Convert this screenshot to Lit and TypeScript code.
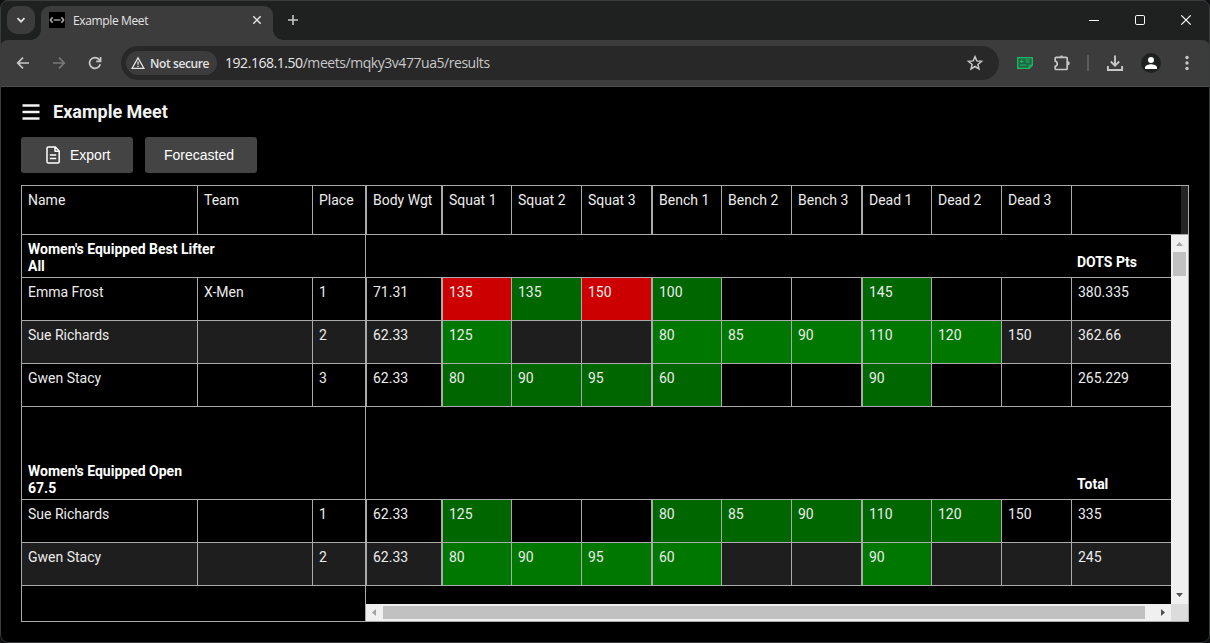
import { LitElement, html, css, nothing } from "lit";
import { customElement, property } from "lit/decorators.js";
import { classMap } from "lit/directives/class-map.js";

type Attempt = [string, "good" | "bad" | ""];
interface Lifter {
  name: string;
  team: string;
  place: string;
  weight: string;
  attempts: Attempt[];
  score: string;
}
interface Group {
  title: string;
  division: string;
  scoreLabel: string;
  tall: boolean;
  lifters: Lifter[];
}

const g = (v: string): Attempt => [v, "good"];
const b = (v: string): Attempt => [v, "bad"];
const n = (v = ""): Attempt => [v, ""];

const gwen: Attempt[] = [g("80"), g("90"), g("95"), g("60"), n(), n(), g("90"), n(), n()];
const sue: Attempt[] = [g("125"), n(), n(), g("80"), g("85"), g("90"), g("110"), g("120"), n("150")];

const GROUPS: Group[] = [
  {
    title: "Women's Equipped Best Lifter",
    division: "All",
    scoreLabel: "DOTS Pts",
    tall: false,
    lifters: [
      {
        name: "Emma Frost", team: "X-Men", place: "1", weight: "71.31", score: "380.335",
        attempts: [b("135"), g("135"), b("150"), g("100"), n(), n(), g("145"), n(), n()],
      },
      { name: "Sue Richards", team: "", place: "2", weight: "62.33", attempts: sue, score: "362.66" },
      { name: "Gwen Stacy", team: "", place: "3", weight: "62.33", attempts: gwen, score: "265.229" },
    ],
  },
  {
    title: "Women's Equipped Open",
    division: "67.5",
    scoreLabel: "Total",
    tall: true,
    lifters: [
      { name: "Sue Richards", team: "", place: "1", weight: "62.33", attempts: sue, score: "335" },
      { name: "Gwen Stacy", team: "", place: "2", weight: "62.33", attempts: gwen, score: "245" },
    ],
  },
];

const LIFTS = ["Squat 1", "Squat 2", "Squat 3", "Bench 1", "Bench 2", "Bench 3", "Dead 1", "Dead 2", "Dead 3"];

@customElement("browser-chrome")
export class BrowserChrome extends LitElement {
  @property() caption = "";
  @property() host = "";
  @property() path = "";

  static styles = css`
    :host { display: block; font-family: "Open Sans", "Noto Sans", sans-serif; color: #e3e3e3; }
    svg { display: block; fill: none; stroke: #c7c7c7; stroke-width: 1.7; flex: none; }
    .strip {
      height: 40px; box-sizing: border-box; padding-left: 7px; display: flex; align-items: flex-end;
      background: #1f2120; border-top: 1px solid #3b3d3f;
    }
    .search {
      width: 28px; height: 28px; border-radius: 10px; background: #3c3c3c; margin-bottom: 6px;
      display: grid; place-items: center;
    }
    .search svg { stroke: #e3e3e3; }
    .tab {
      position: relative; width: 232px; height: 34px; margin-left: 6px; background: #3c3c3c;
      border-radius: 9px 9px 0 0; display: flex; align-items: center; box-sizing: border-box;
      padding: 0 10px 6px 8px;
    }
    .tab::before, .tab::after {
      content: ""; position: absolute; bottom: 0; width: 10px; height: 10px;
    }
    .tab::before { left: -10px; background: radial-gradient(circle at 0 0, transparent 9.5px, #3c3c3c 10px); }
    .tab::after { right: -10px; background: radial-gradient(circle at 100% 0, transparent 9.5px, #3c3c3c 10px); }
    .caption { flex: 1; margin-left: 8px; padding-top: 2px; font-size: 12px; line-height: 16px; letter-spacing: -0.37px; }
    .plus { margin: 0 0 14px 14px; }
    .controls { margin: 0 1px 0 auto; display: flex; padding-bottom: 14px; }
    .control { width: 46px; display: grid; place-items: center; }
    .control svg { stroke: #fff; stroke-width: 1; }
    .under { background: #1f2120; }
    .bar {
      height: 47px; box-sizing: border-box; background: #3c3c3c; border-bottom: 1px solid #4e4e4e;
      display: flex; align-items: center; padding-left: 5px; border-radius: 8px 8px 0 0;
    }
    .icon { width: 36px; display: grid; place-items: center; }
    .icon.wide { width: 37px; }
    .dim svg { stroke: #777; }
    .omni {
      width: 878px; height: 34px; margin: 0 8px; border-radius: 17px; background: #282828;
      display: flex; align-items: center; box-sizing: border-box; padding: 0 15px 0 5px;
    }
    .chip {
      width: 91px; height: 24px; border-radius: 12px; background: #3c3c3c; display: flex;
      align-items: center; box-sizing: border-box; padding-left: 5px; font-size: 12px; font-weight: 600;
      white-space: nowrap; letter-spacing: -0.4px;
    }
    .chip span { margin-left: 5px; }
    .url { flex: 1; margin-left: 8px; font-size: 14px; line-height: 18px; color: #c7c7c7; letter-spacing: -0.45px; }
    .url b { font-weight: 400; color: #e8e8e8; }
    .note svg { stroke: #1fb866; }
    .avatar svg, .more svg { stroke: none; fill: #c7c7c7; }
    .sep { width: 16px; display: grid; place-items: center; }
    .sep i { width: 2px; height: 16px; background: #5c5c5c; }
    .sep + .icon { margin-left: 1px; }
  `;

  render() {
    return html`
      <div class="strip">
        <div class="search">
          <svg width="10" height="10"><path d="M1.5 3.2 5 6.7 8.5 3.2" /></svg>
        </div>
        <div class="tab">
          <svg width="16" height="16" stroke-linejoin="round">
            <rect width="16" height="16" fill="#000" stroke="none" />
            <path d="M3.6 5.2 1.4 8l2.2 2.800M12.4 5.200l2.200 2.800-2.200 2.800" stroke="#aaa" stroke-width="1.6" />
            <path d="M4.500 8h7" stroke="#999" stroke-width="1.4" />
          </svg>
          <span class="caption">${this.caption}</span>
          <svg width="12" height="12"><path d="m2.3 2.3 7.4 7.4M9.7 2.3 2.3 9.7" stroke="#e3e3e3" stroke-width="1.5" /></svg>
        </div>
        <svg class="plus" width="12" height="12"><path d="M6 1v10M1 6h10" stroke-width="1.6" /></svg>
        <div class="controls">
          <div class="control"><svg width="12" height="12"><path d="M1 6.5h10" /></svg></div>
          <div class="control"><svg width="12" height="12"><rect x="1.5" y="1.5" width="9" height="9" rx="1.3" /></svg></div>
          <div class="control"><svg width="12" height="12"><path d="m1.3 1.3 9.4 9.4M10.7 1.3 1.3 10.7" stroke-width="1.2" /></svg></div>
        </div>
      </div>
      <div class="under">
        <div class="bar">
          <div class="icon"><svg width="16" height="16"><path d="M14 8H3M8 2.7 2.7 8 8 13.3" /></svg></div>
          <div class="icon dim"><svg width="16" height="16"><path d="M2 8h11M8 2.7 13.3 8 8 13.3" /></svg></div>
          <div class="icon">
            <svg width="16" height="16"><path d="M13.2 9.2A5.4 5.4 0 1 1 12 4.4L13.4 6M13.6 2v4.4H9.2" /></svg>
          </div>
          <div class="omni">
            <div class="chip">
              <svg width="14" height="14"><path d="M7 1.9 12.9 12.3H1.1Z M7 5.4v3.4M7 9.7v1.3" stroke-width="1.3" stroke="#e3e3e3" /></svg>
              <span>Not secure</span>
            </div>
            <span class="url"><b>${this.host}</b>${this.path}</span>
            <svg width="18" height="18">
              <path d="m9 2.6 1.8 4.3 4.7.4-3.6 3.1 1.1 4.6L9 12.5 5 15l1.1-4.6L2.5 7.3l4.7-.4Z" stroke-width="1.5" />
            </svg>
          </div>
          <div class="icon note">
            <svg width="16" height="12">
              <path d="M.7.7h14.6v7.6l-3 3H.7Z" stroke-width="1.3" fill="#1d6a42" />
              <path d="M3 4.500h3.500M4.700 2.500v3.500M8.500 3h4M8.500 5h4M3 8h6.500M12 11V8.300h3" stroke-width="1" />
            </svg>
          </div>
          <div class="icon wide">
            <svg width="18" height="18">
              <path d="M2.2 4.3a1 1 0 0 1 1-1h10a1 1 0 0 1 1 1v10.2a1 1 0 0 1-1 1h-10a1 1 0 0 1-1-1v-2.200c2.700-.6 2.700-4.600 0-5.200Z" stroke-width="1.7" />
              <path d="M6.600 2.800a2 2 0 0 1 3.800 0ZM14.800 7.300a2 2 0 0 1 0 4Z" fill="#c7c7c7" stroke="none" />
            </svg>
          </div>
          <div class="sep"><i></i></div>
          <div class="icon">
            <svg width="18" height="18"><path d="M9 1.5v10M4.8 7.5 9 11.7l4.2-4.2M1.9 12v4h14.2v-4" stroke-width="1.9" /></svg>
          </div>
          <div class="icon avatar">
            <svg width="20" height="20">
              <circle cx="10" cy="10" r="10" fill="#1f2120" />
              <circle cx="10" cy="7" r="3" fill="#fff" />
              <path d="M4 16v-1.4C4 12.2 8 11.3 10 11.3s6 .9 6 3.3V16Z" fill="#fff" />
            </svg>
          </div>
          <div class="icon more">
            <svg width="4" height="16">
              <circle cx="2" cy="2.5" r="1.7" /><circle cx="2" cy="8" r="1.7" /><circle cx="2" cy="13.5" r="1.7" />
            </svg>
          </div>
        </div>
      </div>
    `;
  }
}

@customElement("results-grid")
export class ResultsGrid extends LitElement {
  static styles = css`
    :host {
      display: block; border: 1px solid #aaa; box-sizing: border-box; width: 1168px; height: 437px;
      font: 14px/17px Roboto, sans-serif; color: #ececec;
    }
    .head { display: flex; height: 49px; box-sizing: border-box; border-bottom: 1px solid #aaa; background: #242424; }
    .head .row { height: 48px; border-bottom: 0; background: #000; }
    .head .total { width: 109px; }
    .body { display: grid; grid-template-columns: 344px 805px 17px; grid-template-rows: 369px 17px; }
    .pinned { grid-row: 1 / 3; box-sizing: border-box; border-right: 1px solid #aaa; }
    .row { display: flex; height: 43px; box-sizing: border-box; border-bottom: 1px solid #aaa; }
    .row.alt { background: #1e1e1e; }
    .cell { box-sizing: border-box; flex: none; padding: 6px 0 0 6px; border-right: 1px solid #aaa; white-space: nowrap; }
    .name { width: 176px; }
    .team { width: 115px; }
    .place { width: 52px; border-right: 0; }
    .head .place { width: 53px; border-right: 1px solid #aaa; }
    .weight { width: 76px; border-left: 1px solid #aaa; }
    .lift { width: 70px; }
    .first { border-left: 1px solid #aaa; }
    .total { width: 99px; border-right: 0; }
    .good { background: #060; }
    .alt .good { background: #070; }
    .bad { background: #c00; }
    .group { align-items: flex-end; font-weight: 700; color: #fff; }
    .group.tall { height: 93px; }
    .group div { padding: 0 0 2px 6px; white-space: pre; }
    .group .label { margin-left: 705px; padding-bottom: 6px; }
    .vbar, .hbar { background: #f0f0f0; display: flex; justify-content: space-between; align-items: center; }
    .vbar { flex-direction: column; }
    .thumb { background: #c1c1c1; }
    .vbar .thumb { width: 13px; height: 24px; margin-bottom: auto; }
    .hbar .thumb { width: 762px; height: 13px; margin-right: auto; }
    .corner { background: #dcdcdc; }
    svg { display: block; fill: #505050; }
    .off { fill: #a3a3a3; }
  `;

  private pinnedCells(name: string, team: string, place: string) {
    return html`
      <div class="cell name">${name}</div>
      <div class="cell team">${team}</div>
      <div class="cell place">${place}</div>
    `;
  }

  private scoreCells(weight: string, attempts: Attempt[], score: string) {
    return html`
      <div class="cell weight">${weight}</div>
      ${attempts.map(
        ([value, result], i) => html`<div
          class=${classMap({ cell: true, lift: true, first: i % 3 === 0, good: result === "good", bad: result === "bad" })}
        >${value}</div>`
      )}
      <div class="cell total">${score || nothing}</div>
    `;
  }

  render() {
    return html`
      <div class="head">
        <div class="row">
          ${this.pinnedCells("Name", "Team", "Place")}
          ${this.scoreCells("Body Wgt", LIFTS.map((l): Attempt => [l, ""]), "")}
        </div>
      </div>
      <div class="body">
        <div class="pinned">
          ${GROUPS.map(
            (group) => html`
              <div class=${classMap({ row: true, group: true, tall: group.tall })}><div>${group.title + "\n" + group.division}</div></div>
              ${group.lifters.map(
                (l, i) => html`<div class=${classMap({ row: true, alt: i % 2 === 1 })}>${this.pinnedCells(l.name, l.team, l.place)}</div>`
              )}
            `
          )}
        </div>
        <div>
          ${GROUPS.map(
            (group) => html`
              <div class=${classMap({ row: true, group: true, tall: group.tall })}><div class="label">${group.scoreLabel}</div></div>
              ${group.lifters.map(
                (l, i) => html`<div class=${classMap({ row: true, alt: i % 2 === 1 })}>${this.scoreCells(l.weight, l.attempts, l.score)}</div>`
              )}
            `
          )}
        </div>
        <div class="vbar">
          <svg class="off" width="17" height="17"><path d="M5 11 8.5 7 12 11Z" /></svg>
          <div class="thumb"></div>
          <svg width="17" height="17"><path d="M5 6h7L8.5 10Z" /></svg>
        </div>
        <div class="hbar">
          <svg class="off" width="17" height="17"><path d="M10 5v7L6 8.5Z" /></svg>
          <div class="thumb"></div>
          <svg width="17" height="17"><path d="M7 5v7l4-3.5Z" /></svg>
        </div>
        <div class="corner"></div>
      </div>
    `;
  }
}

@customElement("app-root")
export class AppRoot extends LitElement {
  static styles = css`
    :host { display: block; width: 1210px; height: 643px; background: #101112; overflow: hidden; }
    .window {
      width: 1210px; height: 643px; box-sizing: border-box; overflow: hidden; background: #000;
      border-radius: 8px; position: relative;
    }
    .window::after {
      content: ""; position: absolute; inset: 0; border: 1px solid #3a3b3c; border-radius: 8px;
    }
    .page { padding: 14px 21px 0; font-family: "Liberation Sans", Arial, sans-serif; color: #fff; }
    .title { display: flex; align-items: center; height: 22px; font: 700 18px/22px Roboto, sans-serif; color: #f2f2f2; }
    .title span { margin-left: 13px; }
    .actions { display: flex; gap: 12px; margin: 14px 0 12px; }
    .button {
      width: 112px; height: 36px; border-radius: 3px; background: #444; font-size: 14px;
      display: flex; align-items: center; box-sizing: border-box; padding-left: 19px;
    }
    .button.export { padding-left: 25px; gap: 10px; }
    .button svg { fill: none; stroke: #fff; stroke-width: 1.5; }
  `;

  render() {
    return html`
      <div class="window">
        <browser-chrome caption="Example Meet" host="192.168.1.50" path="/meets/mqky3v477ua5/results"></browser-chrome>
        <div class="page">
          <div class="title">
            <svg width="19" height="18"><path d="M1.5 2.5h17M1.5 9h17M1.5 15.5h17" stroke="#f2f2f2" stroke-width="2.3" /></svg>
            <span>Example Meet</span>
          </div>
          <div class="actions">
            <div class="button export">
              <svg width="14" height="18" stroke-linejoin="round">
                <path d="M2.3.9h7L13.2 5v10.800a1.300 1.300 0 0 1-1.300 1.300H2.300A1.300 1.300 0 0 1 1 15.800V2.200A1.300 1.300 0 0 1 2.300.900ZM9 1v4.300h4.200M3.800 9h6.400M3.800 12.500h6.400" />
              </svg>
              <span>Export</span>
            </div>
            <div class="button"><span>Forecasted</span></div>
          </div>
          <results-grid></results-grid>
        </div>
      </div>
    `;
  }
}
